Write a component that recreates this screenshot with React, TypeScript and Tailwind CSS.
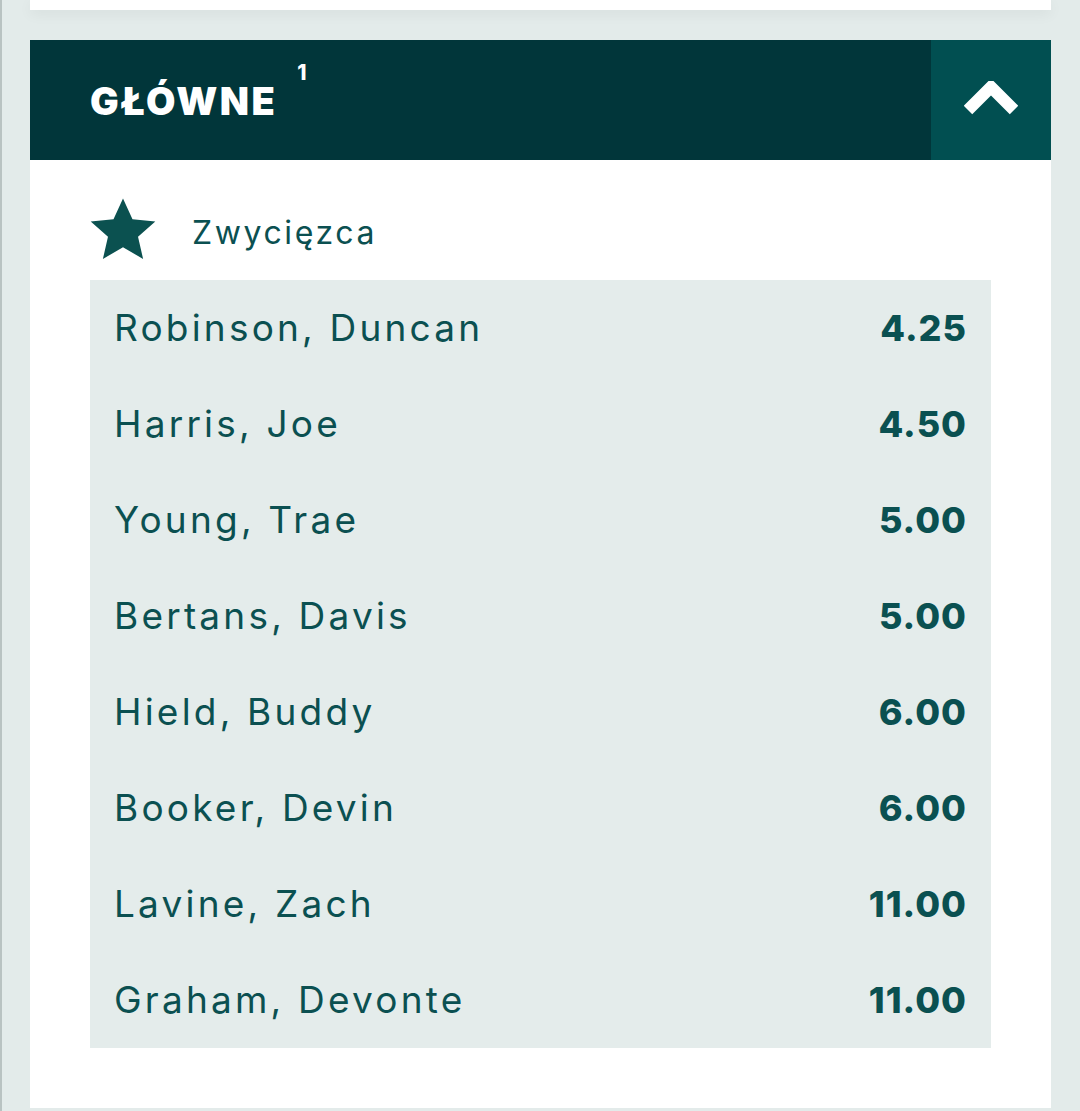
const ROWS = [
  { name: "Robinson, Duncan", odds: "4.25" },
  { name: "Harris, Joe", odds: "4.50" },
  { name: "Young, Trae", odds: "5.00" },
  { name: "Bertans, Davis", odds: "5.00" },
  { name: "Hield, Buddy", odds: "6.00" },
  { name: "Booker, Devin", odds: "6.00" },
  { name: "Lavine, Zach", odds: "11.00" },
  { name: "Graham, Devonte", odds: "11.00" },
];

const App = () => {
  return (
    <div
      className="w-[1080px] h-[1111px] overflow-hidden bg-[#e3ebea] border-l-2 border-[#b9c3c2] flex flex-col pl-[28px] pr-[29px]"
      style={{ fontFamily: "Inter, 'Noto Sans', sans-serif" }}
    >
      {/* previous card */}
      <div className="h-[10px] bg-white shadow-[0_4px_14px_rgba(0,0,0,0.06)]" />

      <div className="mt-[30px] bg-white flex flex-col h-[1068px]">
        {/* header */}
        <div className="flex h-[120px] bg-[#01363a]">
          <div className="flex-1 flex items-center pl-[60px]">
            <span className="text-white text-[38px] font-black tracking-[2.5px] leading-none mt-[2px]">
              GŁÓWNE
            </span>
            <span className="text-white text-[21px] font-extrabold self-start mt-[22px] ml-[20px] leading-none">
              1
            </span>
          </div>
          <button className="w-[120px] h-full bg-[#014f51] flex items-center justify-center">
            <svg width="54" height="38" viewBox="0 0 54 38">
              <path d="M4 29 L27 6 L50 29" fill="none" stroke="#ffffff" strokeWidth="12" strokeLinejoin="miter" />
            </svg>
          </button>
        </div>

        {/* market */}
        <div className="px-[60px] pt-[36px]">
          <div className="flex items-center h-[66px] mb-[18px]">
            <svg width="70" height="68" viewBox="0 0 24 24" className="-ml-[2px]">
              <path
                d="M12 1.2l3.35 7.4 8.05.75-6.1 5.35 1.8 7.9L12 18.4l-7.1 4.2 1.8-7.9L.6 9.35l8.05-.75z"
                fill="#0b5150"
              />
            </svg>
            <span className="ml-[34px] text-[32px] text-[#0b5051] tracking-[2.6px] mt-[8px]">Zwycięzca</span>
          </div>
          <div className="bg-[#e4eceb] flex flex-col">
            {ROWS.map((row, i) => (
              <div key={i} className="h-[96px] flex items-center justify-between px-[24px]">
                <span className="text-[37px] text-[#0b5051] tracking-[3.2px]">{row.name}</span>
                <span className="text-[36px] font-extrabold text-[#0a5051] tracking-[1px]">{row.odds}</span>
              </div>
            ))}
          </div>
        </div>
      </div>
    </div>
  );
};

export default App;
